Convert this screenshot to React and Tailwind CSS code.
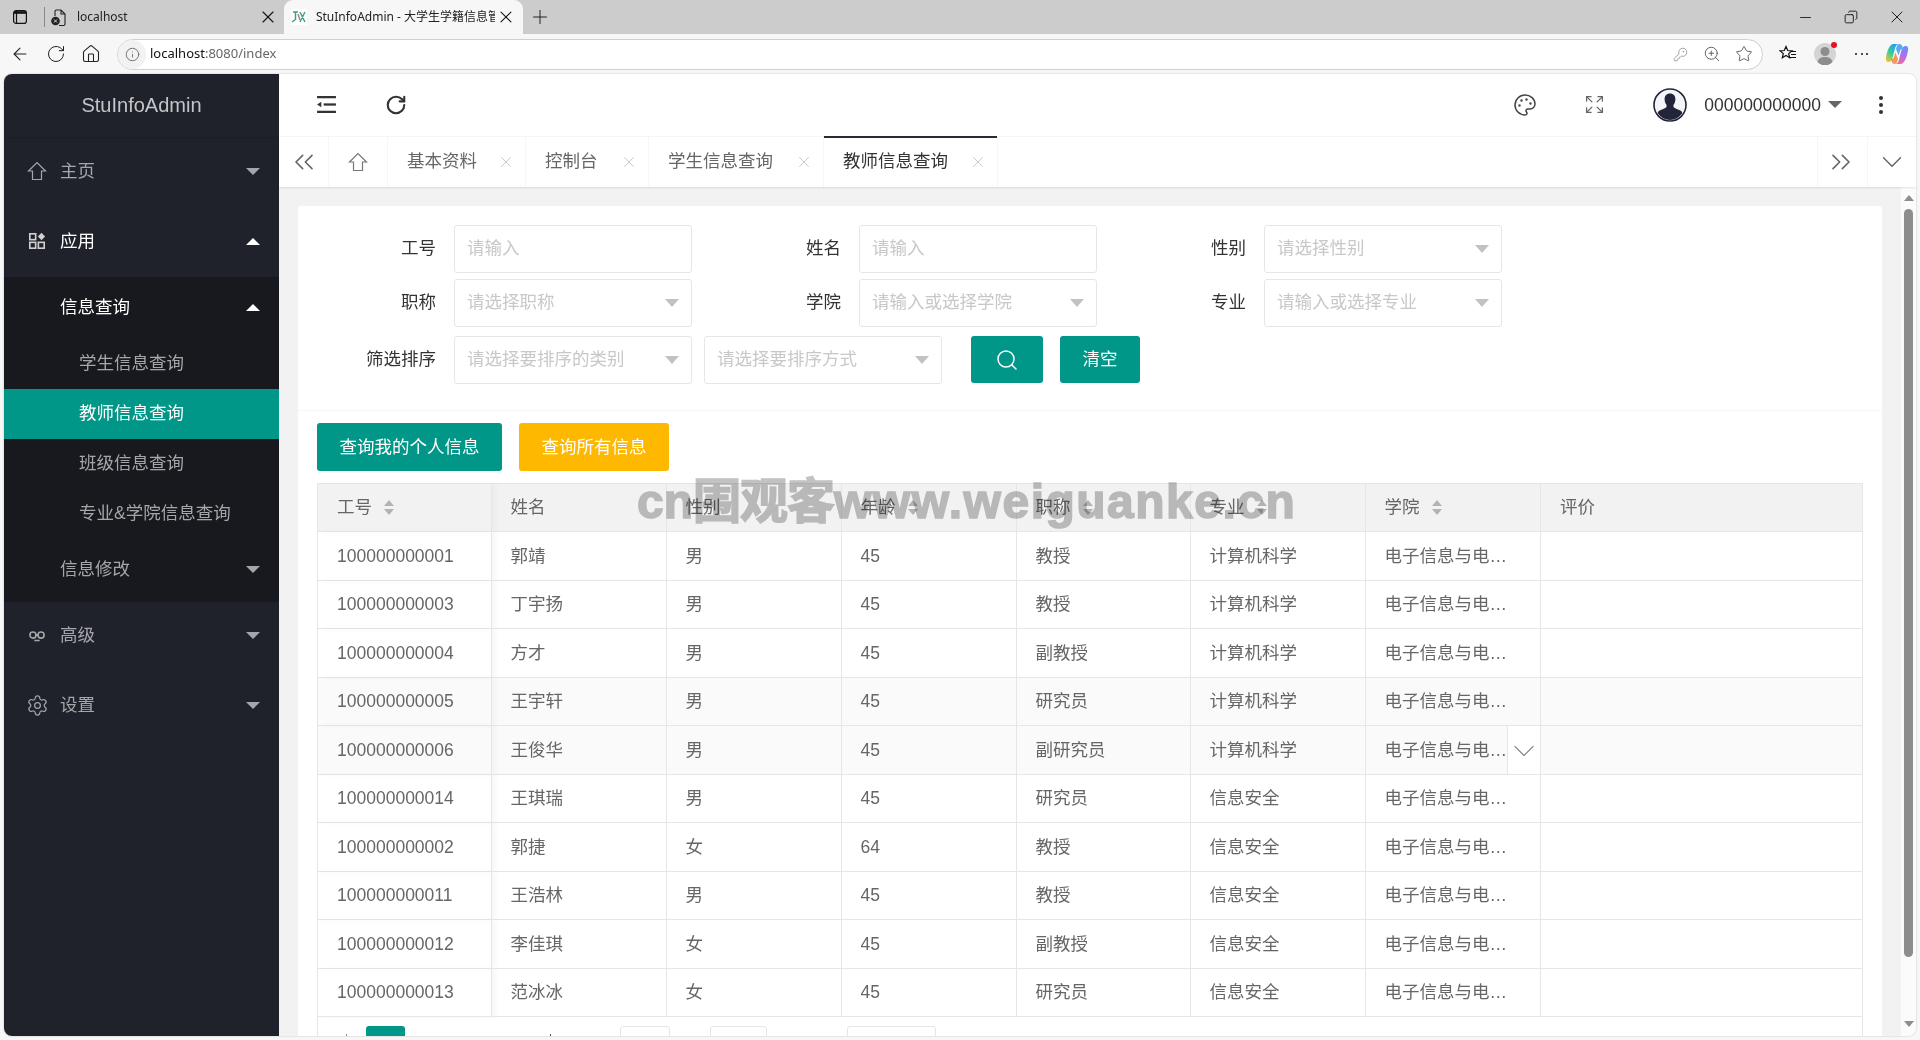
import React from "react";
import { ArrowLeft, RotateCw, X, Plus, Info, KeyRound, ZoomIn, Star, Minus, Palette, Expand, ChevronsLeft, ChevronsRight, ChevronDown, House, Search, Settings, Copy } from "lucide-react";

const Down = ({ c = "border-t-[#a5a6a9]" }) => <span className={`inline-block w-0 h-0 border-x-[7px] border-x-transparent border-t-[7px] ${c}`} />;
const Up = () => <span className="inline-block w-0 h-0 border-x-[7px] border-x-transparent border-b-[7px] border-b-white" />;

const IconHome = ({ className }) => (
  <svg viewBox="0 0 20 20" className={className} fill="none" stroke="currentColor" strokeWidth="1.2"><path d="M1.500 10 10 1.500 18.500 10h-4v8.500h-9V10z" /></svg>
);
const IconApp = ({ className }) => (
  <svg viewBox="0 0 20 20" className={className} fill="none" stroke="currentColor" strokeWidth="1.8"><rect x="2" y="2" width="6.500" height="6.500" /><rect x="2" y="11.500" width="6.500" height="6.500" /><rect x="11.500" y="11.500" width="6.500" height="6.500" /><path d="M15 .8 19 5l-4 4.200L11 5z" fill="currentColor" stroke="none" /></svg>
);
const IconSenior = ({ className }) => (
  <svg viewBox="0 0 20 20" className={className} fill="none" stroke="currentColor" strokeWidth="1.8"><circle cx="5.500" cy="9" r="3.400" /><circle cx="14.500" cy="9" r="3.400" /><path d="M8 9h4M7 15h6" /></svg>
);
const IconMenu = ({ className }) => (
  <svg viewBox="0 0 20 18" className={className} fill="currentColor"><rect x="0" y="0" width="20" height="2.400" /><rect x="7" y="7.800" width="13" height="2.400" /><rect x="0" y="15.600" width="20" height="2.400" /><path d="M0 9l4.500-3v6z" /></svg>
);
const IconAvatar = ({ className }) => (
  <svg viewBox="0 0 34 34" className={className}>
    <circle cx="17" cy="17" r="16" fill="#f4f5f7" stroke="#22243a" strokeWidth="1.600" />
    <path d="M17 5.500c-3.600 0-5.600 2.600-5.400 6 .1 2 .8 4 1.800 5.300.3.600.3 2-.3 2.700-1.200 1.200-5.300 2-7.200 3.600-.9.800-1.100 1.600-1.100 2.100A15.500 15.500 0 0 0 17 32a15.500 15.500 0 0 0 12.200-6.800c0-.5-.2-1.300-1.100-2.100-1.900-1.600-6-2.400-7.200-3.600-.6-.7-.6-2.100-.3-2.700 1-1.300 1.700-3.300 1.800-5.300.2-3.400-1.800-6-5.400-6z" fill="#22243a" />
  </svg>
);
const Copilot = () => (
  <svg viewBox="0 0 24 24" className="w-[24px] h-[24px]">
    <defs>
      <linearGradient id="cpa" x1="0.700" y1="0" x2="0.200" y2="1"><stop offset="0" stopColor="#1f9cf0" /><stop offset="0.550" stopColor="#3ccf8e" /><stop offset="1" stopColor="#f2c230" /></linearGradient>
      <linearGradient id="cpb" x1="0.700" y1="0" x2="0.300" y2="1"><stop offset="0" stopColor="#6f8cf5" /><stop offset="0.500" stopColor="#b26cf0" /><stop offset="1" stopColor="#f0708c" /></linearGradient>
    </defs>
    <path d="M8.500 2h6c-2.500 0-3.700 1.500-4.400 4L7.500 16c-.6 2.200-1.800 4-4.300 4C1.300 20 .5 18 1 15.500 2 9.500 4.500 2 8.500 2z" fill="url(#cpa)" />
    <path d="M15.500 22h-6c2.500 0 3.700-1.500 4.400-4l2.600-10c.6-2.200 1.800-4 4.300-4 1.900 0 2.700 2 2.200 4.500C22 14.500 19.500 22 15.500 22z" fill="url(#cpb)" />
    <path d="M14.500 2c1.600 0 2.400 1 2.900 2.500l1 3.500c-1.200-1.400-2.700-.9-3.300.5l-1.500 5L11 7c.5-2.500 1.500-5 3.500-5z" fill="#5aa9f2" />
    <path d="M9.500 22c-1.600 0-2.400-1-2.900-2.500l-1-3.500c1.200 1.400 2.700.9 3.300-.5l1.500-5L13 17c-.5 2.500-1.500 5-3.500 5z" fill="#f29a5a" />
  </svg>
);

const TopItem = ({ icon, label, open, caret }) => (
  <div className={`h-[70px] flex items-center pb-[2px] pl-[24px] pr-[19px] ${open ? "text-white" : "text-[#a5a6a9]"}`}>
    <span className="w-[32px] flex">{icon}</span>
    <span className="flex-1">{label}</span>
    {caret}
  </div>
);
const Leaf = ({ children, active }) => (
  <div className={`h-[50px] flex items-center pb-[2px] pl-[75px] ${active ? "bg-[#009688] text-white" : "text-[#a5a6a9]"}`}>{children}</div>
);

const Sidebar = () => (
  <aside className="w-[275px] shrink-0 bg-[#1f222a] text-[17.5px]">
    <div className="h-[63px] pb-[2px] flex items-center justify-center text-[20px] text-[#c4c5c7] shadow-[0_1px_1px_rgba(0,0,0,0.1)]">StuInfoAdmin</div>
    <TopItem icon={<IconHome className="w-[20px] h-[20px] -ml-[1px]" />} label="主页" caret={<Down />} />
    <TopItem open icon={<IconApp className="w-[18px] h-[18px] text-[#d0d0d0]" />} label="应用" caret={<Up />} />
    <div className="bg-[#18191e]">
      <div className="h-[62px] pb-[2px] flex items-center pl-[56px] pr-[19px] text-white"><span className="flex-1">信息查询</span><Up /></div>
      <Leaf>学生信息查询</Leaf>
      <Leaf active>教师信息查询</Leaf>
      <Leaf>班级信息查询</Leaf>
      <Leaf>专业&amp;学院信息查询</Leaf>
      <div className="h-[62.5px] pb-[2px] flex items-center pl-[56px] pr-[19px] text-[#a5a6a9]"><span className="flex-1">信息修改</span><Down /></div>
    </div>
    <TopItem icon={<IconSenior className="w-[18px] h-[18px]" />} label="高级" caret={<Down />} />
    <TopItem icon={<Settings className="w-[23px] h-[23px] -ml-[2px]" strokeWidth={1.3} />} label="设置" caret={<Down />} />
  </aside>
);

const Tab = ({ children, w, active }) => (
  <div className={`${w} h-full flex items-center pl-[19px] border-r border-[#f6f6f6] relative ${active ? "text-[#333]" : "text-[#666]"}`}>
    {active && <span className="absolute left-0 right-0 top-[-1px] h-[2px] bg-[#292b34]" />}
    <span>{children}</span>
    <X className="absolute right-[10px] top-[16px] w-[18px] h-[18px] text-[#c4c4c4]" strokeWidth={1.2} />
  </div>
);

const Caret = () => <span className="w-0 h-0 border-x-[7px] border-x-transparent border-t-[8px] border-t-[#c2c2c2]" />;
const Field = ({ label, lw, w = "w-[238px]", select, ph }) => (
  <div className="flex items-center">
    {label !== undefined && <label className={`${lw} pr-[18px] text-right text-[#333] whitespace-nowrap`}>{label}</label>}
    <div className={`${w} h-[48px] border border-[#e6e6e6] rounded-[3px] flex items-center justify-between pl-[12px] pr-[12px] bg-white`}>
      <span className="text-[#c8c8c8] whitespace-nowrap">{ph}</span>
      {select && <Caret />}
    </div>
  </div>
);

const Sort = () => (
  <span className="inline-flex flex-col gap-[3px] ml-[12px] align-middle">
    <span className="w-0 h-0 border-x-[5.500px] border-x-transparent border-b-[6px] border-b-[#b2b2b2]" />
    <span className="w-0 h-0 border-x-[5.500px] border-x-transparent border-t-[6px] border-t-[#b2b2b2]" />
  </span>
);

const rows = [
  ["100000000001", "郭靖", "男", "45", "教授", "计算机科学"],
  ["100000000003", "丁宇扬", "男", "45", "教授", "计算机科学"],
  ["100000000004", "方才", "男", "45", "副教授", "计算机科学"],
  ["100000000005", "王宇轩", "男", "45", "研究员", "计算机科学"],
  ["100000000006", "王俊华", "男", "45", "副研究员", "计算机科学"],
  ["100000000014", "王琪瑞", "男", "45", "研究员", "信息安全"],
  ["100000000002", "郭捷", "女", "64", "教授", "信息安全"],
  ["100000000011", "王浩林", "男", "45", "教授", "信息安全"],
  ["100000000012", "李佳琪", "女", "45", "副教授", "信息安全"],
  ["100000000013", "范冰冰", "女", "45", "研究员", "信息安全"],
];
const cols = "grid grid-cols-[173.500px_175px_175px_175px_174px_175px_175.500px_1fr]";
const cell = "border-r border-b border-[#e6e6e6] pl-[19px] flex items-center min-w-0 whitespace-nowrap";
const first = "shadow-[4px_0_6px_rgba(0,0,0,0.03)]";

const Table = () => (
  <div className="w-[1546px] border-l border-t border-r border-[#e6e6e6] text-[#666]">
    <div className={`${cols} h-[48px] bg-[#f2f2f2]`}>
      <div className={`${cell} ${first}`}>工号<Sort /></div>
      <div className={cell}>姓名</div>
      <div className={cell}>性别</div>
      <div className={cell}>年龄<Sort /></div>
      <div className={cell}>职称<Sort /></div>
      <div className={cell}>专业<Sort /></div>
      <div className={cell}>学院<Sort /></div>
      <div className={`${cell} border-r-0`}>评价</div>
    </div>
    {rows.map((r, i) => (
      <div key={r[0]} className={`${cols} h-[48.500px] ${i === 3 || i === 4 ? "bg-[#fafafa]" : "bg-white"}`}>
        <div className={`${cell} ${first}`}>{r[0]}</div>
        {r.slice(1).map((v, j) => <div key={j} className={cell}>{v}</div>)}
        <div className={`${cell} pr-[19px] relative`}>
          <span className="truncate">电子信息与电气工程学院</span>
          {i === 4 && (
            <span className="absolute right-0 top-0 bottom-0 w-[33px] bg-white border-l border-[#e6e6e6] flex items-center justify-center">
              <ChevronDown className="w-[36px] h-[36px] shrink-0 text-[#888] mt-[3px]" strokeWidth={0.8} />
            </span>
          )}
        </div>
        <div className={`${cell} border-r-0`} />
      </div>
    ))}
    <div className="h-[60px] flex pt-[9px] pl-[28px] items-start">
      <span className="w-px h-[20px] bg-[#888] mt-[8px]" />
      <span className="w-[39px] h-[40px] bg-[#009688] rounded-[3px] ml-[19px] text-white flex items-center justify-center">1</span>
      <span className="w-px h-[20px] bg-[#555] mt-[8px] ml-[145px]" />
      <span className="w-[50px] h-[40px] border border-[#e6e6e6] rounded-[3px] ml-[69px]" />
      <span className="w-[57px] h-[40px] border border-[#e6e6e6] rounded-[3px] ml-[40px]" />
      <span className="w-[89px] h-[40px] border border-[#e6e6e6] rounded-[3px] ml-[80px]" />
    </div>
  </div>
);

const Main = () => (
  <main className="flex-1 min-w-0 flex flex-col bg-[#f2f2f2] text-[17.5px]">
    <div className="h-[62.500px] bg-white border-b border-[#f6f6f6] flex items-center text-[#333] shrink-0">
      <IconMenu className="w-[19px] h-[17px] ml-[38px] text-[#333]" />
      <RotateCw className="w-[22px] h-[22px] ml-[49px] text-[#333]" strokeWidth={2.3} />
      <span className="flex-1" />
      <Palette className="w-[24px] h-[24px] text-[#444]" strokeWidth={1.5} />
      <Expand className="w-[21px] h-[21px] ml-[47px] text-[#666]" strokeWidth={1.5} />
      <IconAvatar className="w-[34px] h-[34px] ml-[48px]" />
      <span className="ml-[17px]">000000000000</span>
      <span className="ml-[7px] w-0 h-0 border-x-[7px] border-x-transparent border-t-[7px] border-t-[#666]" />
      <span className="ml-[37px] mr-[33px] flex flex-col gap-[3px]">
        <span className="w-[4px] h-[4px] rounded-full bg-[#333]" />
        <span className="w-[4px] h-[4px] rounded-full bg-[#333]" />
        <span className="w-[4px] h-[4px] rounded-full bg-[#333]" />
      </span>
    </div>
    <div className="h-[50px] bg-white flex shrink-0 shadow-[0_1px_2px_rgba(0,0,0,0.1)] z-10">
      <div className="w-[50px] flex items-center justify-center border-r border-[#f6f6f6] text-[#666]"><ChevronsLeft className="w-[32px] h-[32px]" strokeWidth={1.2} /></div>
      <div className="w-[59px] flex items-center justify-center border-r border-[#f6f6f6] text-[#777]"><IconHome className="w-[20px] h-[20px]" /></div>
      <Tab w="w-[138px]">基本资料</Tab>
      <Tab w="w-[123px]">控制台</Tab>
      <Tab w="w-[175px]">学生信息查询</Tab>
      <Tab w="w-[174px]" active>教师信息查询</Tab>
      <span className="flex-1" />
      <div className="w-[50px] flex items-center justify-center pr-[3px] border-l border-[#f6f6f6] text-[#666]"><ChevronsRight className="w-[32px] h-[32px]" strokeWidth={1.2} /></div>
      <div className="w-[49px] flex items-center justify-center border-l border-[#f6f6f6] text-[#666]"><ChevronDown className="w-[34px] h-[34px] shrink-0" strokeWidth={1} /></div>
    </div>
    <div className="flex-1 min-h-0 flex overflow-hidden">
      <div className="flex-1 min-w-0 pt-[19px] pl-[19px] pr-[19px] overflow-hidden">
        <div className="bg-white rounded-[3px] h-[900px]">
          <div className="pt-[19px] h-[205.500px] border-b border-[#f6f6f6]">
            <div className="flex">
              <Field label="工号" lw="w-[156px]" ph="请输入" />
              <Field label="姓名" lw="w-[167px]" ph="请输入" />
              <Field label="性别" lw="w-[167px]" ph="请选择性别" select />
            </div>
            <div className="flex mt-[6px]">
              <Field label="职称" lw="w-[156px]" ph="请选择职称" select />
              <Field label="学院" lw="w-[167px]" ph="请输入或选择学院" select />
              <Field label="专业" lw="w-[167px]" ph="请输入或选择专业" select />
            </div>
            <div className="flex mt-[9px] items-center">
              <Field label="筛选排序" lw="w-[156px]" ph="请选择要排序的类别" select />
              <div className="ml-[12px]"><Field w="w-[238px]" ph="请选择要排序方式" select /></div>
              <button className="ml-[29px] w-[72px] h-[47px] bg-[#009688] rounded-[3px] flex items-center justify-center text-white"><Search className="w-[24px] h-[24px]" strokeWidth={1.5} /></button>
              <button className="ml-[17px] w-[80px] h-[47px] bg-[#009688] rounded-[3px] text-white">清空</button>
            </div>
          </div>
          <div className="pt-[12px] pl-[19px]">
            <div className="flex gap-[17px]">
              <button className="w-[185px] h-[48px] bg-[#009688] rounded-[3px] text-white">查询我的个人信息</button>
              <button className="w-[150px] h-[48px] bg-[#ffb800] rounded-[3px] text-white">查询所有信息</button>
            </div>
            <div className="mt-[12px]"><Table /></div>
          </div>
        </div>
      </div>
      <div className="w-[15px] shrink-0 bg-[#fbfbfb] flex flex-col items-center pt-[8px] relative">
        <span className="w-0 h-0 border-x-[5px] border-x-transparent border-b-[6px] border-b-[#8d8d8d]" />
        <span className="w-[9px] h-[748px] rounded-full bg-[#8d8d8d] mt-[8px]" />
        <span className="flex-1" />
        <span className="w-0 h-0 border-x-[5px] border-x-transparent border-t-[6px] border-t-[#8d8d8d] mb-[9px]" />
      </div>
    </div>
  </main>
);

const Chrome = () => (
  <>
    <div className="h-[34px] bg-[#cccccc] flex items-center relative text-[12px] shrink-0 font-['Noto_Sans','Noto_Sans_CJK_SC',sans-serif]">
      <svg viewBox="0 0 14 14" className="w-[14px] h-[14px] ml-[13px]" fill="none" stroke="#111" strokeWidth="1.200"><rect x="0.600" y="0.600" width="12.800" height="12.800" rx="2.500" /><path d="M3.500 1v12" /><path d="M1 2.500h12" strokeWidth="2.600" /></svg>
      <span className="w-px h-[20px] bg-[#888] ml-[17px]" />
      <svg viewBox="0 0 15 17" className="w-[15px] h-[17px] ml-[6px]" fill="none" stroke="#222" strokeWidth="1.100"><path d="M5 1h5l4 4v10a1.500 1.500 0 0 1-1.500 1.500H8M4 7V2.500A1.500 1.500 0 0 1 5 1M10 1v4h4" /><circle cx="4.500" cy="12" r="4.300" fill="#222" stroke="none" /><path d="M3 10.500l3 3M6 10.500l-3 3" stroke="#ddd" strokeWidth="1" /></svg>
      <span className="ml-[11px] w-[181px] text-[#222]">localhost</span>
      <X className="w-[20px] h-[20px] text-[#111]" strokeWidth={1.3} />
      <div className="ml-[6px] w-[239px] h-[34px] bg-[#f7f7f7] rounded-t-[9px] flex items-center px-[7px]">
        <svg viewBox="0 0 16 16" className="w-[16px] h-[16px] bg-white"><path d="M2 3h5M4.500 3v8M1 13l4-3M9 3l5 10M14 3 9 13" stroke="#3f9d93" strokeWidth="1.500" fill="none" /><path d="M7 5l2 6" stroke="#b98a60" strokeWidth="1.500" /></svg>
        <span className="ml-[9px] w-[180px] overflow-hidden whitespace-nowrap text-[#222]">StuInfoAdmin - 大学生学籍信息管</span>
        <X className="w-[20px] h-[20px] ml-[1px] text-[#111]" strokeWidth={1.3} />
      </div>
      <Plus className="w-[22px] h-[22px] ml-[6px] text-[#222]" strokeWidth={1.1} />
      <span className="flex-1" />
      <Minus className="w-[17px] h-[17px] text-[#111]" strokeWidth={1.2} />
      <Copy className="w-[14px] h-[14px] ml-[30px] text-[#111] -scale-x-100" strokeWidth={1.500} />
      <X className="w-[20px] h-[20px] ml-[29px] mr-[13px] text-[#111]" strokeWidth={1.1} />
    </div>
    <div className="h-[40px] bg-[#f7f7f7] flex items-center shrink-0 text-[13px] font-['Noto_Sans',sans-serif]">
      <ArrowLeft className="w-[20px] h-[20px] ml-[10px] text-[#222]" strokeWidth={1.3} />
      <RotateCw className="w-[20px] h-[20px] ml-[16px] text-[#222]" strokeWidth={1.2} />
      <House className="w-[20px] h-[20px] ml-[15px] text-[#222]" strokeWidth={1.3} />
      <div className="ml-[16px] w-[1646px] h-[31px] bg-white border border-[#cfcfcf] rounded-full flex items-center">
        <span className="w-[28px] h-[29px] rounded-full bg-[#f2f2f2] flex items-center justify-center ml-0"><Info className="w-[15px] h-[15px] text-[#666]" strokeWidth={1.4} /></span>
        <span className="ml-[4px] text-[#111]">localhost<span className="text-[#666]">:8080/index</span></span>
        <span className="flex-1" />
        <KeyRound className="w-[15px] h-[15px] text-[#888]" strokeWidth={1.2} />
        <ZoomIn className="w-[18px] h-[18px] ml-[15px] text-[#555]" strokeWidth={1.2} />
        <Star className="w-[18px] h-[18px] ml-[14px] mr-[9px] text-[#555]" strokeWidth={1.2} />
      </div>
      <svg viewBox="0 0 18 18" className="w-[18px] h-[18px] ml-[16px]" fill="none" stroke="#111" strokeWidth="1.200"><path d="M7 1.500l1.700 4 4.300.3-3.300 2.800 1 4.200L7 10.500 3.300 12.800l1-4.200L1 5.800l4.300-.3z" /><path d="M12 6.500h5M12 9.500h5M11 12.500h6" /></svg>
      <span className="relative ml-[17px] w-[22px] h-[22px] rounded-full bg-[#d4d4d4] flex items-center justify-center">
        <svg viewBox="0 0 22 22" className="w-[22px] h-[22px]"><circle cx="11" cy="8.500" r="4.500" fill="#8d8d8d" /><path d="M3.500 19c1-4 4-5 7.500-5s6.500 1 7.500 5a10 10 0 0 1-15 0z" fill="#8d8d8d" /></svg>
        <span className="absolute right-[-1px] top-[-1px] w-[6px] h-[6px] rounded-full bg-[#e81123]" />
      </span>
      <span className="ml-[19px] w-[13px] flex justify-between">
        <span className="w-[2px] h-[2px] bg-[#111] rounded-full" />
        <span className="w-[2px] h-[2px] bg-[#111] rounded-full" />
        <span className="w-[2px] h-[2px] bg-[#111] rounded-full" />
      </span>
      <span className="ml-[17px]"><Copilot /></span>
    </div>
  </>
);

export default function App() {
  return (
    <div className="w-[1920px] h-[1040px] overflow-hidden bg-[#f7f7f7] flex flex-col relative font-['Liberation_Sans','Noto_Sans_CJK_SC',sans-serif]">
      <Chrome />
      <div className="h-[962px] mx-[4px] flex rounded-[8px] overflow-hidden shadow-[0_0_2px_rgba(0,0,0,0.25)]">
        <Sidebar />
        <Main />
      </div>
      <div className="absolute left-[637px] top-[474px] text-[48px] leading-[56px] font-bold text-[#c2c2c2] [-webkit-text-stroke:1.5px_#c2c2c2] mix-blend-multiply whitespace-nowrap pointer-events-none">
        cn<span className="tracking-[-1px]">围观客</span><span className="tracking-[1.5px]">www.weiguanke.cn</span>
      </div>
    </div>
  );
}
